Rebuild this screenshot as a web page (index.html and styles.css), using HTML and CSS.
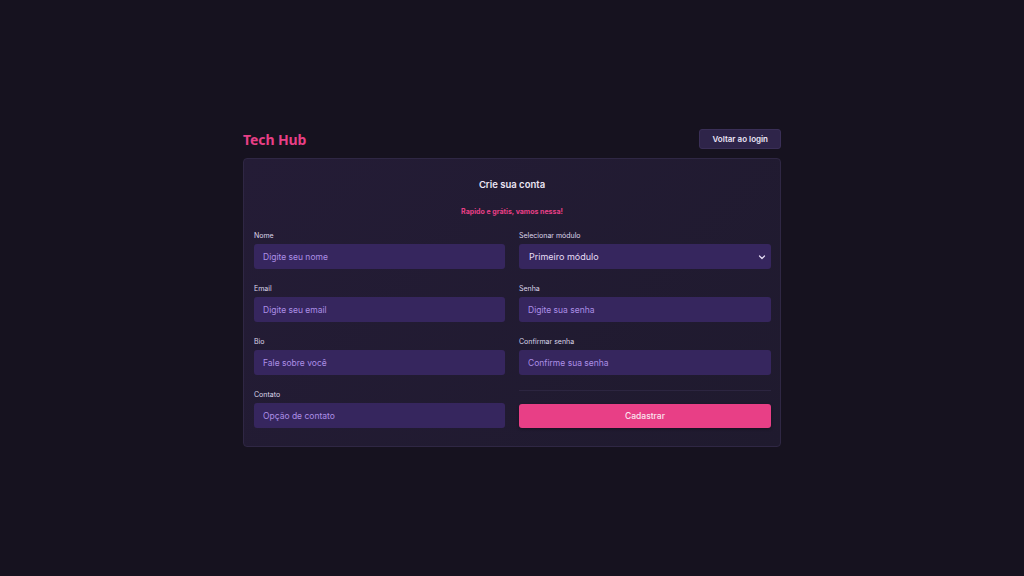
FILE: index.html
```html
<!DOCTYPE html>
<html lang="pt-BR">
<head>
<meta charset="utf-8">
<title>Tech Hub - Cadastro</title>
<link rel="stylesheet" href="styles.css">
</head>
<body>
<main class="wrap">
  <header class="topbar">
    <h1 class="brand">Tech Hub</h1>
    <button class="back-btn" type="button">Voltar ao login</button>
  </header>
  <section class="card">
    <h2 class="card-title">Crie sua conta</h2>
    <p class="card-sub">Rapido e grátis, vamos nessa!</p>
    <form class="grid">
      <div class="field">
        <label class="label">Nome</label>
        <input class="input" type="text" placeholder="Digite seu nome">
      </div>
      <div class="field">
        <label class="label">Selecionar módulo</label>
        <div class="select">
          <span>Primeiro módulo</span>
          <svg class="chev" width="8" height="8" viewBox="0 0 8 8"><path d="M1.5 3 L4 5.5 L6.5 3" fill="none" stroke="#e6def5" stroke-width="1.2" stroke-linecap="round" stroke-linejoin="round"/></svg>
        </div>
      </div>
      <div class="field">
        <label class="label">Email</label>
        <input class="input" type="text" placeholder="Digite seu email">
      </div>
      <div class="field">
        <label class="label">Senha</label>
        <input class="input" type="password" placeholder="Digite sua senha">
      </div>
      <div class="field">
        <label class="label">Bio</label>
        <input class="input" type="text" placeholder="Fale sobre você">
      </div>
      <div class="field">
        <label class="label">Confirmar senha</label>
        <input class="input" type="password" placeholder="Confirme sua senha">
      </div>
      <div class="field">
        <label class="label">Contato</label>
        <input class="input" type="text" placeholder="Opção de contato">
      </div>
      <div class="field">
        <div class="divider"></div>
        <button class="submit" type="button">Cadastrar</button>
      </div>
    </form>
  </section>
</main>
</body>
</html>
```

FILE: styles.css
```css
* { box-sizing: border-box; }
html, body { margin: 0; padding: 0; }
body {
  background: #16121f;
  font-family: Inter, "Noto Sans", sans-serif;
  color: #e6e0f0;
  width: 1024px;
  height: 576px;
}
.wrap {
  width: 538px;
  margin: 0 auto;
  padding-top: 129px;
}
.topbar {
  display: flex;
  justify-content: space-between;
  align-items: center;
  height: 20px;
  margin-bottom: 9px;
}
.brand {
  margin: 0;
  font-family: "Noto Sans", sans-serif;
  font-weight: 700;
  font-size: 14px;
  color: #e83f86;
  letter-spacing: -0.1px;
}
.back-btn {
  height: 20px;
  padding: 0 12px;
  background: #2e2449;
  border: 1px solid #3a2f57;
  border-radius: 3px;
  color: #ece6f7;
  font-family: Inter, sans-serif;
  font-size: 8px;
  font-weight: 600;
}
.card {
  background: linear-gradient(135deg, #241c36 0%, #1f1a2e 100%);
  border: 1px solid #2f2744;
  border-radius: 4px;
  padding: 20px 10px 18px;
}
.card-title {
  margin: 0;
  text-align: center;
  font-size: 9.5px;
  line-height: 12px;
  font-weight: 600;
  color: #ebe5f4;
}
.card-sub {
  margin: 16px 0 0;
  text-align: center;
  font-size: 7px;
  line-height: 9px;
  font-weight: 700;
  color: #e83f86;
}
.grid {
  margin-top: 15px;
  display: grid;
  grid-template-columns: 251px 252px;
  column-gap: 14px;
  row-gap: 15px;
}
.field {
  display: flex;
  flex-direction: column;
}
.label {
  font-size: 7px;
  line-height: 9px;
  color: #ddd6ea;
  margin-bottom: 4px;
}
.input, .select {
  height: 25px;
  border: none;
  border-radius: 3px;
  background: #36265e;
  padding: 0 9px;
  font-family: Inter, sans-serif;
  font-size: 8.5px;
  color: #b497ec;
  outline: none;
}
.input::placeholder { color: #ac8ee6; }
.select {
  display: flex;
  align-items: center;
  justify-content: space-between;
  color: #e6def5;
  font-size: 9px;
  font-weight: 400;
  padding-left: 10px;
  padding-right: 5px;
}
.chev { display: block; }
.divider {
  height: 1px;
  background: #2c2540;
  margin-bottom: 13px;
}
.submit {
  height: 24px;
  border: none;
  border-radius: 3px;
  background: #e83f86;
  color: #fbe6f0;
  font-family: Inter, sans-serif;
  font-size: 8.5px;
  font-weight: 500;
  box-shadow: 0 1px 3px rgba(0,0,0,0.35);
}
```
